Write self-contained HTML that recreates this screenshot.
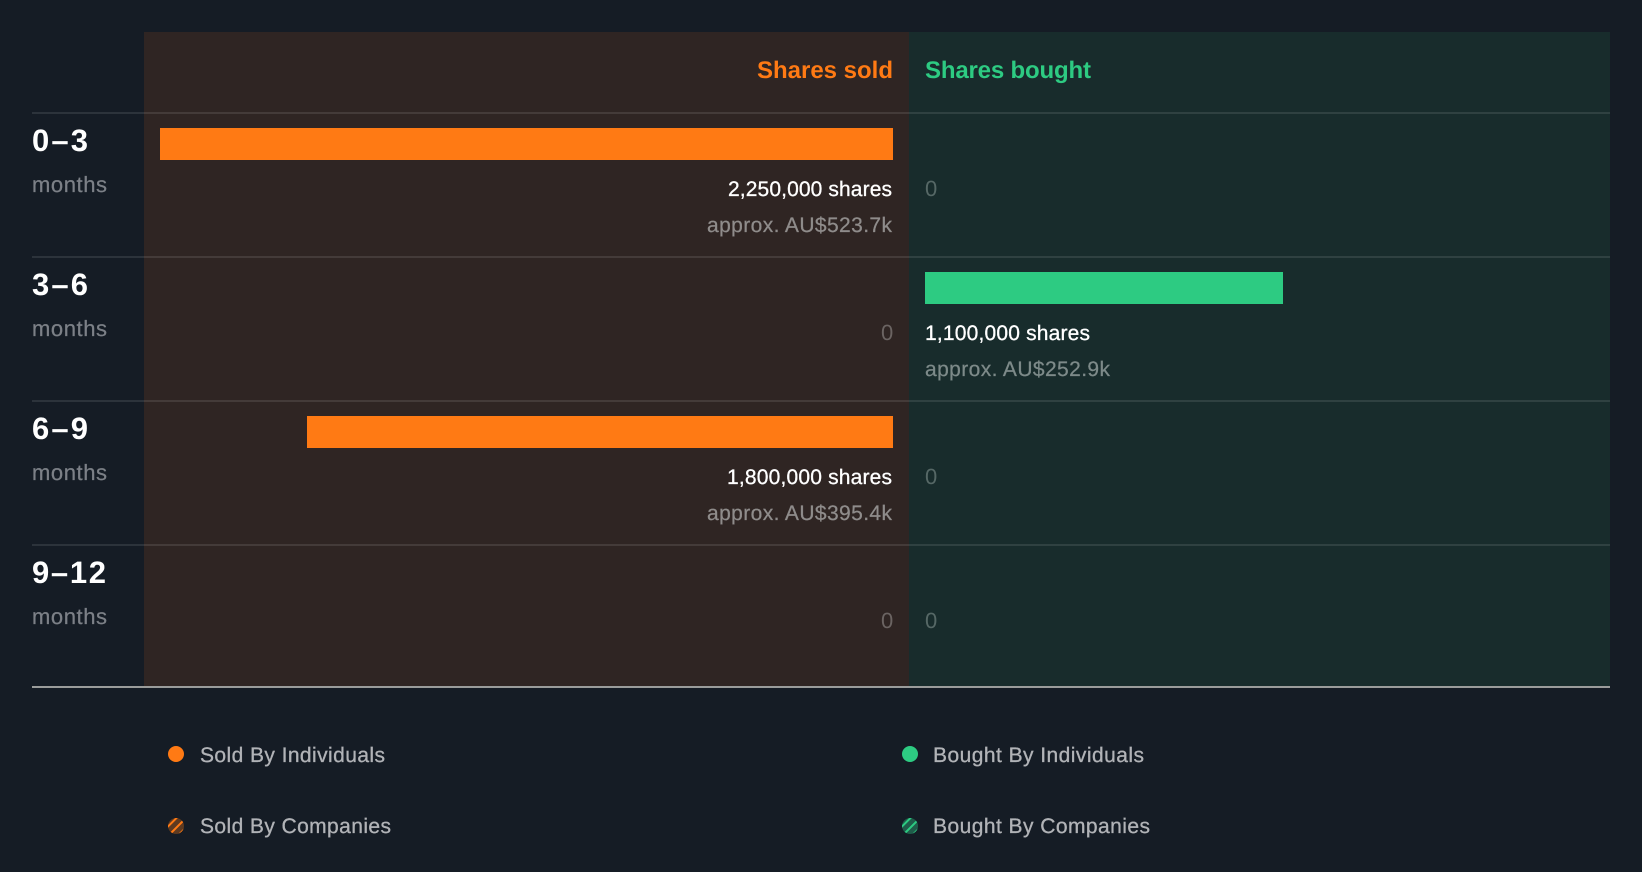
<!DOCTYPE html>
<html><head><meta charset="utf-8"><style>
html,body{margin:0;padding:0;background:#151c25;width:1642px;height:872px;overflow:hidden}
svg{display:block}
text{font-family:"Liberation Sans",sans-serif;text-rendering:geometricPrecision}
.h{font-size:24px;font-weight:bold}
.r{font-size:31px;font-weight:bold;fill:#fff}
.m{font-size:22px;fill:#7c8087;stroke:#7c8087;stroke-width:.25}
.s{font-size:21px;fill:#fff;stroke:#fff;stroke-width:.3}
.a{font-size:21px;stroke-width:.25}
.z{font-size:22px}
.l{font-size:21px;fill:#b1b3b7;stroke:#b1b3b7;stroke-width:.3}
</style></head><body>
<svg width="1642" height="872" viewBox="0 0 1642 872" xmlns="http://www.w3.org/2000/svg">
<defs>
<clipPath id="c1"><circle cx="176" cy="826" r="8"/></clipPath>
<clipPath id="c2"><circle cx="910" cy="826" r="8"/></clipPath>
</defs>
<rect width="1642" height="872" fill="#151c25"/>
<rect x="144" y="32" width="765" height="654" fill="#2f2523"/>
<rect x="909" y="32" width="701" height="654" fill="#182c2c"/>
<g fill="#fff" fill-opacity=".1">
<rect x="32" y="112" width="1578" height="2"/>
<rect x="32" y="256" width="1578" height="2"/>
<rect x="32" y="400" width="1578" height="2"/>
<rect x="32" y="544" width="1578" height="2"/>
</g>
<rect x="32" y="686" width="1578" height="2" fill="#9a9c9b"/>

<text class="h" x="757" y="78" fill="#ff7a14" textLength="136">Shares sold</text>
<text class="h" x="925" y="78" fill="#2dcb82" textLength="166">Shares bought</text>

<text class="r" x="32" y="151" textLength="56">0–3</text>
<text class="m" x="32" y="192" textLength="75">months</text>
<text class="r" x="32" y="295" textLength="56">3–6</text>
<text class="m" x="32" y="336" textLength="75">months</text>
<text class="r" x="32" y="439" textLength="56">6–9</text>
<text class="m" x="32" y="480" textLength="75">months</text>
<text class="r" x="32" y="583" textLength="74">9–12</text>
<text class="m" x="32" y="624" textLength="75">months</text>

<rect x="160" y="128" width="733" height="32" fill="#ff7a14"/>
<rect x="925" y="272" width="358" height="32" fill="#2dcb82"/>
<rect x="307" y="416" width="586" height="32" fill="#ff7a14"/>

<text class="s" x="728" y="196" textLength="164">2,250,000 shares</text>
<text class="a" x="707" y="232" fill="#8f8c8b" stroke="#8f8c8b" textLength="185">approx. AU$523.7k</text>
<text class="z" x="925" y="196" fill="#566866">0</text>

<text class="z" x="881" y="340" fill="#6b6462">0</text>
<text class="s" x="925" y="340" textLength="165">1,100,000 shares</text>
<text class="a" x="925" y="376" fill="#7d8a89" stroke="#7d8a89" textLength="185">approx. AU$252.9k</text>

<text class="s" x="727" y="484" textLength="165">1,800,000 shares</text>
<text class="a" x="707" y="520" fill="#8f8c8b" stroke="#8f8c8b" textLength="185">approx. AU$395.4k</text>
<text class="z" x="925" y="484" fill="#566866">0</text>

<text class="z" x="881" y="628" fill="#6b6462">0</text>
<text class="z" x="925" y="628" fill="#566866">0</text>

<circle cx="176" cy="754" r="8" fill="#ff7a14"/>
<text class="l" x="200" y="762" textLength="185">Sold By Individuals</text>
<g clip-path="url(#c1)">
<rect x="168" y="818" width="16" height="16" fill="#5e3a20"/>
<path d="M166 828.5L178 816.5M166 838L186 818M174 839.5L190 823.5" stroke="#ff7a14" stroke-width="2" fill="none"/>
</g>
<text class="l" x="200" y="833" textLength="191">Sold By Companies</text>

<circle cx="910" cy="754" r="8" fill="#2dcb82"/>
<text class="l" x="933" y="762" textLength="211">Bought By Individuals</text>
<g clip-path="url(#c2)">
<rect x="902" y="818" width="16" height="16" fill="#1f5c4a"/>
<path d="M900 828.5L912 816.5M900 838L920 818M908 839.5L924 823.5" stroke="#2dcb82" stroke-width="2" fill="none"/>
</g>
<text class="l" x="933" y="833" textLength="217">Bought By Companies</text>
</svg>
</body></html>
